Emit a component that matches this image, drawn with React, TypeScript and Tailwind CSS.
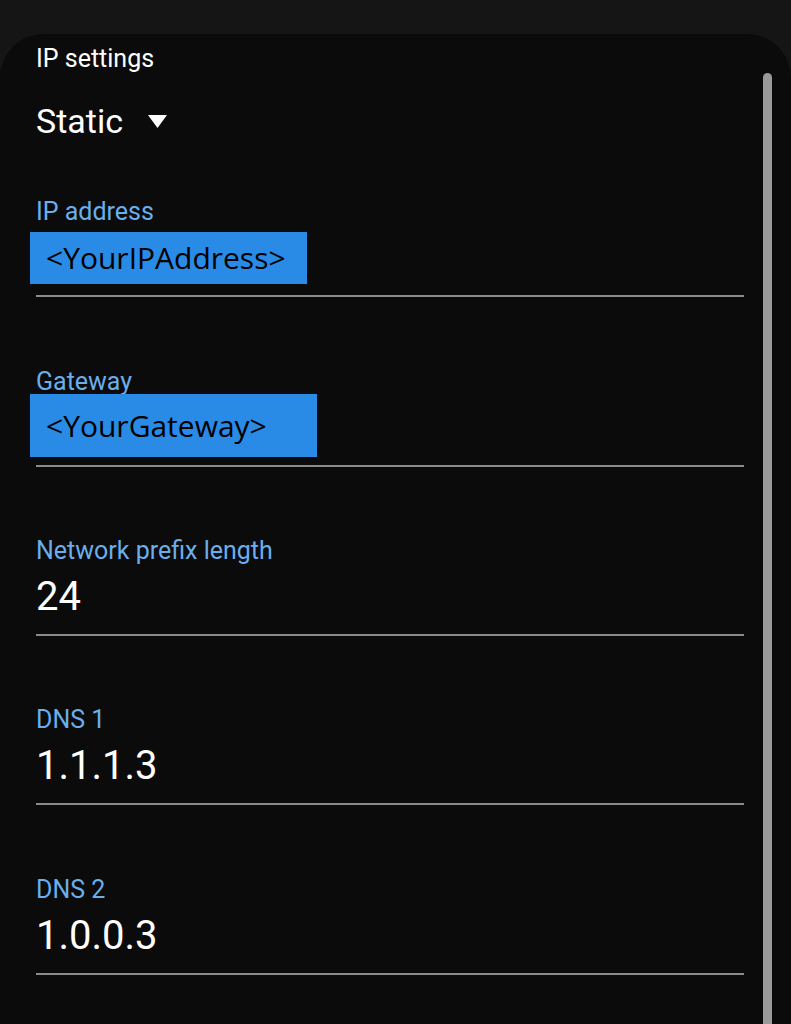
import React from "react";

type FieldProps = {
  label: string;
  value: string;
  box?: "ip" | "gw";
  mb: string;
};

function Field({ label, value, box, mb }: FieldProps) {
  return (
    <div className={`flex flex-col ${mb}`}>
      <div className="h-[28px] text-[25px] leading-[28px] text-[#6aaeec]">{label}</div>
      <div className="relative mt-[8px] h-[48px] text-[40px] leading-[48px] text-white">
        {box === "ip" && (
          <div className="absolute left-[-6px] top-[-2px] flex h-[52px] w-[277px] items-center bg-[#2a8be6] pl-[16px] font-['Open_Sans',sans-serif] text-[30px] leading-[36px] text-black">
            {value}
          </div>
        )}
        {box === "gw" && (
          <div className="absolute left-[-6px] top-[-10px] flex h-[63px] w-[287px] items-center bg-[#2a8be6] pl-[16px] font-['Open_Sans',sans-serif] text-[30px] leading-[36px] text-black">
            {value}
          </div>
        )}
        {!box && value}
      </div>
      <div className="mt-[13px] h-[2px] bg-[#8a8a8a]" />
    </div>
  );
}

export default function App() {
  return (
    <div className="h-[1024px] overflow-hidden bg-[#151515] pt-[34px] font-['Roboto',sans-serif]">
      <div className="relative h-[990px] overflow-hidden rounded-t-[44px] bg-[#0b0b0b] pl-[36px] pr-[47px] pt-[11px]">
        <div className="h-[28px] text-[25px] leading-[28px] text-white">IP settings</div>
        <div className="mt-[28px] flex h-[40px] items-center text-[34px] leading-[40px] text-white">
          <span>Static</span>
          <svg className="ml-[25px]" width="19" height="13" viewBox="0 0 19 13">
            <polygon points="0,0 19,0 9.5,13" fill="#ffffff" />
          </svg>
        </div>
        <div className="mt-[57px] flex flex-col">
          <Field label="IP address" value="<YourIPAddress>" box="ip" mb="mb-[71px]" />
          <Field label="Gateway" value="<YourGateway>" box="gw" mb="mb-[70px]" />
          <Field label="Network prefix length" value="24" mb="mb-[70px]" />
          <Field label="DNS 1" value="1.1.1.3" mb="mb-[71px]" />
          <Field label="DNS 2" value="1.0.0.3" mb="mb-0" />
        </div>
        <div className="absolute bottom-0 right-[19px] top-[39px] w-[9px] rounded-t-full bg-[#9a9a9a]" />
      </div>
    </div>
  );
}
